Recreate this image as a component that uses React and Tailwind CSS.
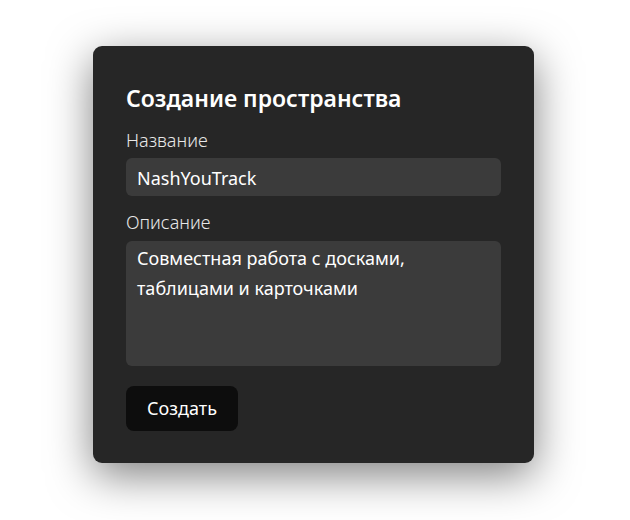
export default function App() {
  return (
    <div
      className="min-h-[520px] bg-white flex justify-center pt-[46px]"
      style={{ fontFamily: '"Noto Sans", "Open Sans", sans-serif' }}
    >
      <div className="w-[441px] h-[417px] -ml-[3px] bg-[#262626] rounded-[9px] shadow-[0_12px_44px_rgba(0,0,0,0.5)] px-[33px] pt-[36px]">
        <h2 className="text-[23px] leading-[32px] font-semibold text-white">
          Создание пространства
        </h2>
        <label className="block mt-[14px] text-[18px] leading-[24px] font-light text-[#e8e8e8]">
          Название
        </label>
        <div className="mt-[6px] h-[38px] rounded-[6px] bg-[#3b3b3b] px-[11px] pt-[2px] flex items-center text-[18px] text-white">
          NashYouTrack
        </div>
        <label className="block mt-[14px] text-[18px] leading-[24px] font-light text-[#e8e8e8]">
          Описание
        </label>
        <div className="mt-[7px] h-[125px] rounded-[6px] bg-[#3b3b3b] px-[11px] pt-[2px] text-[18px] leading-[30px] text-white">
          Совместная работа с досками,
          <br />
          таблицами и карточками
        </div>
        <button className="mt-[20px] h-[45px] w-[112px] rounded-[8px] bg-[#0d0d0d] text-[18px] text-white">
          Создать
        </button>
      </div>
    </div>
  );
}
